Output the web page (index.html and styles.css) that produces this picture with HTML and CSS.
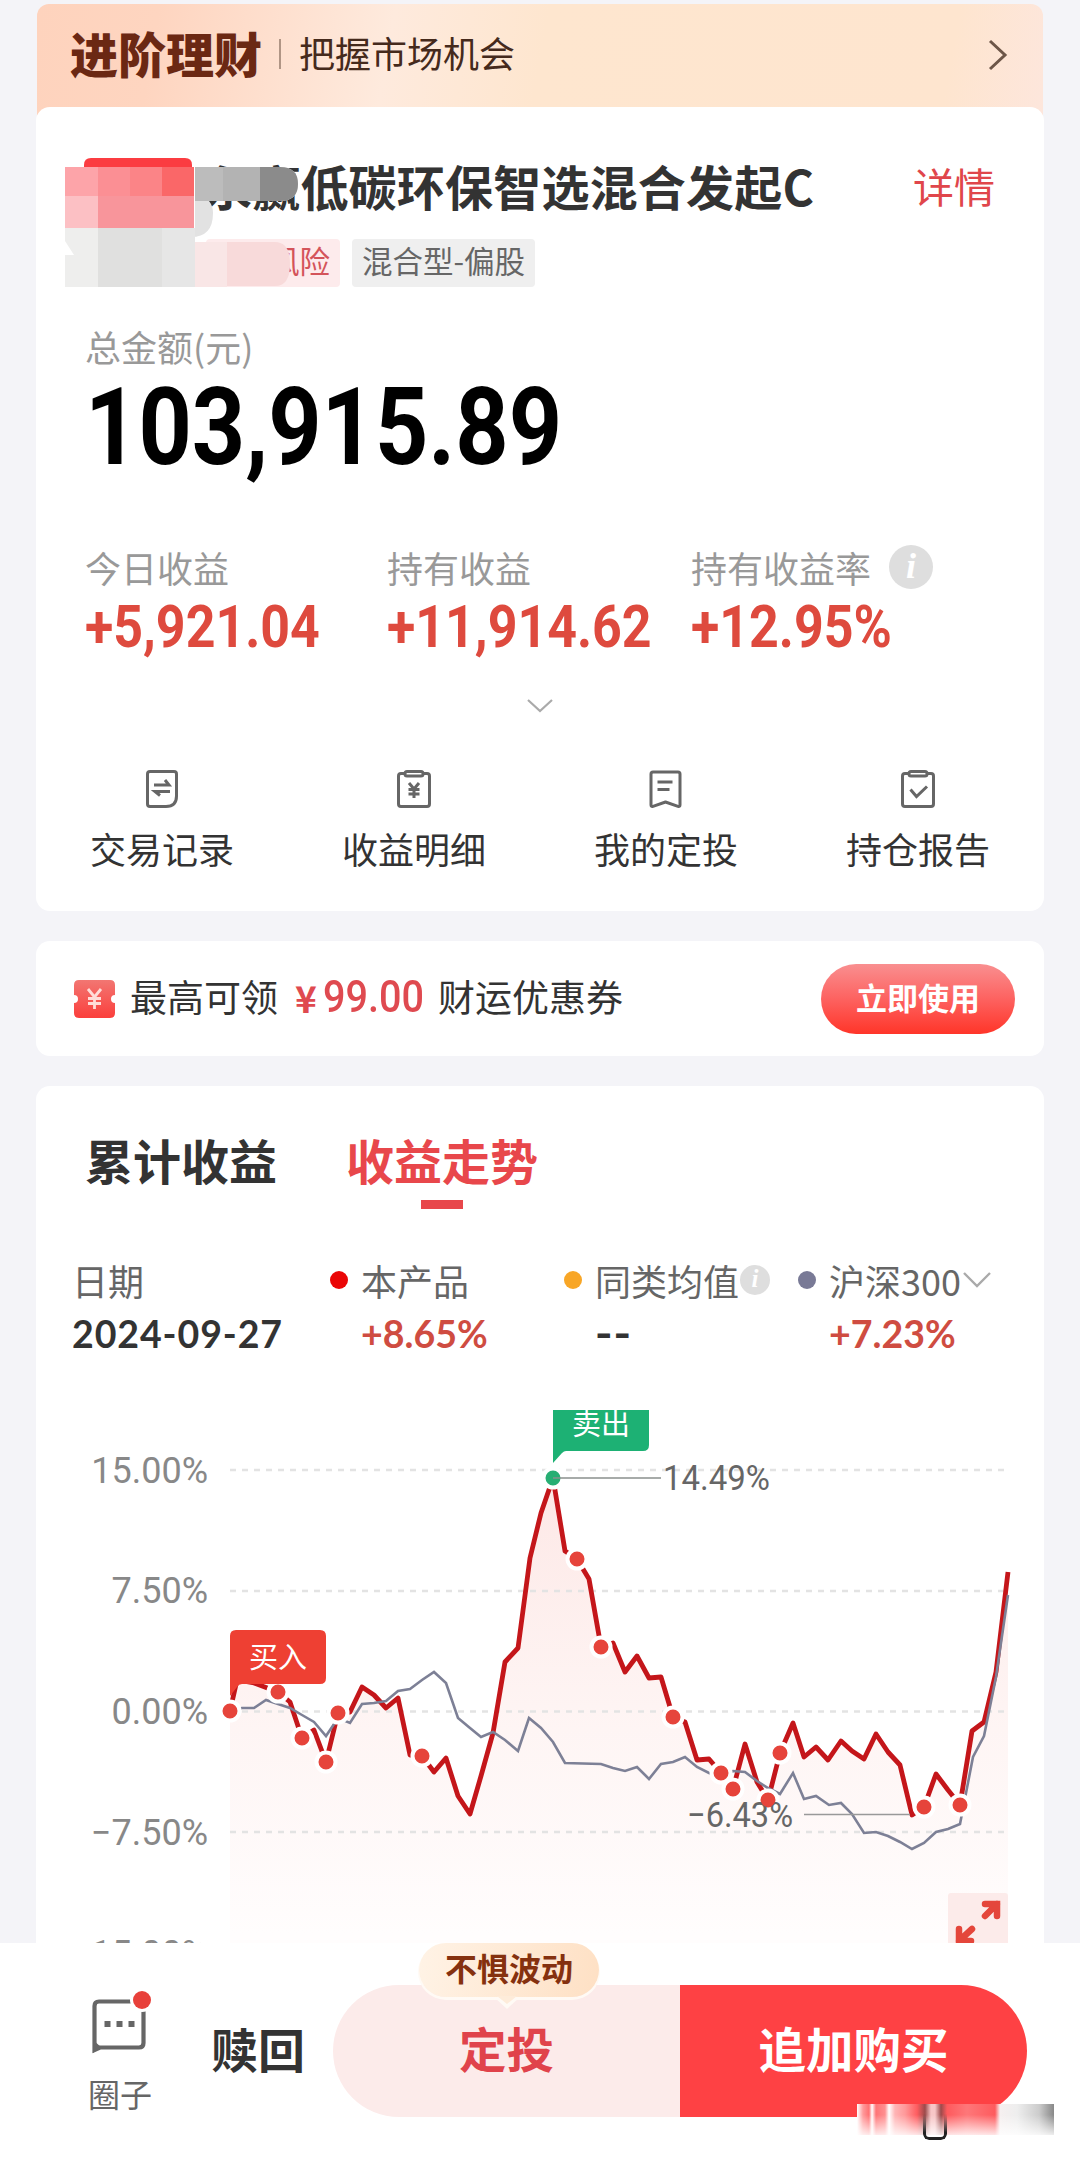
FILE: index.html
```
<!DOCTYPE html>
<html lang="zh-CN">
<head>
    <meta charset="UTF-8">
    <meta name="viewport" content="width=device-width, initial-scale=1.0">
    <title>进阶理财</title>
    <link rel="stylesheet" href="styles.css">
</head>
<body>

    <main class="content">
        <div class="banner">
            <strong class="banner-title">进阶理财</strong>
            <span class="banner-line"></span>
            <span class="banner-text">把握市场机会</span>
            <svg class="banner-arrow" width="20" height="32" viewBox="0 0 20 32" fill="none" stroke="#6d5648" stroke-width="3">
                <path d="M2 2l15 14L2 30" />
            </svg>
        </div>

        <section class="card fund">
            <svg class="mosaic" width="262" height="144" viewBox="0 0 262 144">
                <path d="M19 20V12q0-7 7-7h94q7 0 7 7v8z" fill="#fb3c41" />
                <path d="M0 80h130v-66h85q18 0 18 17 0 17-18 17h-71q4 5 4 12 0 24-22 24h-28v50H0z" fill="#e2e2e2" />
                <path d="M130 14h28v34h-28z" fill="#bcbcbc" />
                <path d="M158 14h37v34h-37z" fill="#b3b3b3" />
                <path d="M195 14h20q18 0 18 17 0 17-18 17h-20z" fill="#8b8b8b" />
                <rect x="0" y="14" width="33" height="29" fill="#fda4a9" />
                <rect x="33" y="14" width="32" height="29" fill="#fb8f94" />
                <rect x="65" y="14" width="32" height="29" fill="#fb8487" />
                <rect x="97" y="14" width="32" height="29" fill="#fa6768" />
                <rect x="0" y="43" width="33" height="32" fill="#fcc0c4" />
                <rect x="33" y="43" width="96" height="32" fill="#f8959b" />
                <rect x="0" y="75" width="33" height="59" fill="#eeeeed" />
                <rect x="33" y="75" width="64" height="59" fill="#e0e0df" />
                <rect x="97" y="75" width="33" height="59" fill="#e6e6e6" />
                <path d="M130 89h80q15 0 15 22t-15 22h-80z" fill="#f8dada" />
                <rect x="130" y="89" width="32" height="45" fill="#f9e6e6" />
                <path d="M0 88l9 14H0z" fill="#fff" />
            </svg>
            <div class="fund-head">
                <h1>永赢低碳环保智选混合发起C</h1>
                <a class="detail">详情</a>
            </div>
            <div class="tags">
                <span class="tag tag-risk">中高风险</span>
                <span class="tag">混合型-偏股</span>
            </div>

            <div class="label total-label">总金额(元)</div>
            <div class="total"><span class="num">103,915.89</span></div>

            <div class="stats">
                <div>
                    <div class="label">今日收益</div>
                    <div class="stat"><span class="num">+5,921.04</span></div>
                </div>
                <div>
                    <div class="label">持有收益</div>
                    <div class="stat"><span class="num">+11,914.62</span></div>
                </div>
                <div>
                    <div class="label">持有收益率 <i class="info">i</i></div>
                    <div class="stat"><span class="num">+12.95%</span></div>
                </div>
            </div>

            <svg class="expand" width="26" height="14" viewBox="0 0 26 14" fill="none" stroke="#aaa" stroke-width="2.2">
                <path d="M1 1l12 11L25 1" />
            </svg>

            <div class="actions">
                <div class="action">
                    <svg width="34" height="38" viewBox="0 0 34 38" fill="none" stroke="#666" stroke-width="3">
                        <path d="M5 1.5h24q2.500 0 2.500 2.500v22q0 10.500-10.500 10.500H5q-2.500 0-2.500-2.500V4q0-2.500 2.500-2.500z" />
                        <path d="M9 15h15l-4-5M25 21.500H10l5 4" />
                    </svg>
                    <span>交易记录</span>
                </div>
                <div class="action">
                    <svg width="34" height="38" viewBox="0 0 34 38" fill="none" stroke="#666" stroke-width="3">
                        <path d="M8 3.500H4q-2.500 0-2.500 2.500v28q0 2.500 2.500 2.500h26q2.500 0 2.500-2.500V6q0-2.500-2.500-2.500h-4" />
                        <rect x="8" y="1.500" width="18" height="4.500" rx="2" />
                        <path d="M12 13l5 6 5-6M17 19v9M11.500 19.500h11M11.500 24h11" />
                    </svg>
                    <span>收益明细</span>
                </div>
                <div class="action">
                    <svg width="34" height="38" viewBox="0 0 34 38" fill="none" stroke="#666" stroke-width="3">
                        <path d="M4 2h25q2 0 2 2v31q0 2-2 1.300L16.500 32 4 36.300q-2 .7-2-1.300V4q0-2 2-2z" stroke-linejoin="round" />
                        <path d="M8.500 12h15M8.500 19.500h12" />
                    </svg>
                    <span>我的定投</span>
                </div>
                <div class="action">
                    <svg width="34" height="38" viewBox="0 0 34 38" fill="none" stroke="#666" stroke-width="3">
                        <path d="M8 3.500H4q-2.500 0-2.500 2.500v28q0 2.500 2.500 2.500h26q2.500 0 2.500-2.500V6q0-2.500-2.500-2.500h-4" />
                        <rect x="8" y="1.500" width="18" height="4.500" rx="2" />
                        <path d="M9.500 19.500l6 7 10.500-10" />
                    </svg>
                    <span>持仓报告</span>
                </div>
            </div>
        </section>

        <section class="card coupon">
            <svg width="41" height="38" viewBox="0 0 41 38">
                <defs>
                    <linearGradient id="ticket" x1="0" y1="0" x2="0" y2="1">
                        <stop offset="0" stop-color="#f27672" />
                        <stop offset="1" stop-color="#fb3f3c" />
                    </linearGradient>
                </defs>
                <path d="M5 0h31q5 0 5 5v10q-4 0-4 4t4 4v10q0 5-5 5H5q-5 0-5-5V23q4 0 4-4t-4-4V5q0-5 5-5z" fill="url(#ticket)" />
                <path d="M14 9l6.500 8L27 9M20.500 17v12M14 18.500h13M14 23.500h13" fill="none" stroke="#ffdcd8" stroke-width="2.800" />
            </svg>
            <span class="coupon-text">最高可领</span>
            <span class="coupon-price"><b>¥</b><span class="num">99.00</span></span>
            <span class="coupon-text">财运优惠券</span>
            <a class="use-btn">立即使用</a>
        </section>

        <section class="card trend">
            <div class="tabs">
                <span class="tab">累计收益</span>
                <span class="tab active">收益走势</span>
            </div>

            <div class="legend">
                <div class="legend-item">
                    <div class="legend-name">日期</div>
                    <div class="legend-value date">2024-09-27</div>
                </div>
                <div class="legend-item">
                    <div class="legend-name"><i class="dot dot-red"></i>本产品</div>
                    <div class="legend-value up">+8.65%</div>
                </div>
                <div class="legend-item">
                    <div class="legend-name"><i class="dot dot-orange"></i>同类均值<i class="info info-small">i</i></div>
                    <div class="legend-value none">--</div>
                </div>
                <div class="legend-item">
                    <div class="legend-name"><i class="dot dot-blue"></i>沪深300
                        <svg width="28" height="16" viewBox="0 0 28 16" fill="none" stroke="#aaa" stroke-width="2.4">
                            <path d="M1 1l13 13L27 1" />
                        </svg>
                    </div>
                    <div class="legend-value up">+7.23%</div>
                </div>
            </div>

            <svg class="chart" width="1008" height="533" viewBox="36 1410 1008 533">
                <defs>
                    <linearGradient id="area" gradientUnits="userSpaceOnUse" x1="0" y1="1478" x2="0" y2="1935">
                        <stop offset="0" stop-color="#fde8e6" />
                        <stop offset="0.500" stop-color="#fef4f3" />
                        <stop offset="1" stop-color="#fffdfd" />
                    </linearGradient>
                </defs>

                <!-- area under the product line -->
                <path fill="url(#area)" d="M230 1943V1711L237 1680 254 1683 278 1692 290 1702 302 1738 314 1730 326 1762 338 1713 350 1712 362 1687 374 1695 386 1708 398 1698 410 1755 422 1756 434 1772 446 1758 458 1796 470 1814 481 1776 493 1733 505 1662 518 1648 530 1558 541 1513 553 1478 565 1551 577 1559 589 1579 601 1647 613 1643 625 1672 637 1656 649 1678 661 1677 673 1717 685 1722 697 1760 709 1759 721 1773 733 1789 745 1744 757 1782 768 1800 780 1753 793 1723 804 1757 816 1747 828 1760 841 1741 852 1751 864 1759 876 1734 888 1752 900 1765 912 1815 924 1807 936 1774 948 1790 960 1805 972 1731 984 1722 996 1672 1008 1572V1943z" />

                <g class="grid">
                    <path d="M230 1470H1008M230 1591H1008M230 1711.500H1008M230 1832H1008" />
                </g>

                <g class="axis">
                    <text x="208" y="1483">15.00%</text>
                    <text x="208" y="1603">7.50%</text>
                    <text x="208" y="1724">0.00%</text>
                    <text x="208" y="1845">−7.50%</text>
                    <text x="208" y="1966">15.00%</text>
                </g>

                <polyline class="line-product" points="230,1711 237,1680 254,1683 278,1692 290,1702 302,1738 314,1730 326,1762 338,1713 350,1712 362,1687 374,1695 386,1708 398,1698 410,1755 422,1756 434,1772 446,1758 458,1796 470,1814 481,1776 493,1733 505,1662 518,1648 530,1558 541,1513 553,1478 565,1551 577,1559 589,1579 601,1647 613,1643 625,1672 637,1656 649,1678 661,1677 673,1717 685,1722 697,1760 709,1759 721,1773 733,1789 745,1744 757,1782 768,1800 780,1753 793,1723 804,1757 816,1747 828,1760 841,1741 852,1751 864,1759 876,1734 888,1752 900,1765 912,1815 924,1807 936,1774 948,1790 960,1805 972,1731 984,1722 996,1672 1008,1572" />
                <polyline class="line-index" points="230,1711 242,1708 254,1708 266,1700 278,1704 290,1708 302,1715 314,1722 326,1736 338,1718 350,1723 362,1704 374,1703 386,1701 398,1691 410,1689 422,1680 434,1672 446,1683 458,1718 470,1728 481,1737 493,1732 505,1740 518,1751 529,1718 541,1728 553,1742 565,1763 601,1764 613,1768 625,1771 637,1767 649,1779 661,1764 673,1762 685,1757 697,1767 709,1773 721,1776 733,1771 745,1772 757,1781 768,1788 780,1794 793,1773 804,1799 816,1796 829,1805 841,1803 852,1814 864,1833 876,1832 888,1836 900,1842 912,1849 924,1843 936,1832 948,1829 960,1824 973,1757 984,1736 996,1677 1008,1595" />

                <g class="trades">
                    <circle cx="230" cy="1711" r="9.500" />
                    <circle cx="278" cy="1692" r="9.500" />
                    <circle cx="302" cy="1738" r="9.500" />
                    <circle cx="326" cy="1762" r="9.500" />
                    <circle cx="338" cy="1713" r="9.500" />
                    <circle cx="422" cy="1756" r="9.500" />
                    <circle cx="577" cy="1559" r="9.500" />
                    <circle cx="601" cy="1647" r="9.500" />
                    <circle cx="673" cy="1717" r="9.500" />
                    <circle cx="721" cy="1773" r="9.500" />
                    <circle cx="733" cy="1789" r="9.500" />
                    <circle cx="768" cy="1800" r="9.500" />
                    <circle cx="780" cy="1753" r="9.500" />
                    <circle cx="924" cy="1807" r="9.500" />
                    <circle cx="960" cy="1805" r="9.500" />
                    <circle class="sell" cx="553" cy="1478" r="9.500" />
                </g>

                <!-- highest and lowest points -->
                <path d="M553 1478H661" stroke="#8a8f8c" stroke-width="1.500" />
                <text class="peak" x="663" y="1490" textLength="107" lengthAdjust="spacingAndGlyphs">14.49%</text>
                <text class="peak" x="687" y="1827" textLength="106" lengthAdjust="spacingAndGlyphs">−6.43%</text>
                <path d="M804 1814.500H910" stroke="#999" stroke-width="1.500" />
                <circle cx="768" cy="1800" r="7" fill="#e6443b" />

                <path d="M236 1630h84q6 0 6 6v42q0 6-6 6h-78q-3 0-5 3l-7 9v-60q0-6 6-6z" fill="#ee4033" />
                <text class="flag" x="278" y="1668">买入</text>
                <path d="M553 1400h96v45q0 6-6 6h-77q-2 0-4 2l-9 10z" fill="#1db174" />
                <text class="flag" x="601" y="1435">卖出</text>

                <rect x="948" y="1893" width="60" height="60" rx="3" fill="#fcebea" />
                <path d="M985 1904h12v12M997 1904l-12 12M959 1929v12h12M959 1941l13-12" fill="none" stroke="#e4463b" stroke-width="6.500" stroke-linecap="round" />
            </svg>
        </section>
    </main>

    <footer class="bar">
        <div class="circle">
            <svg width="56" height="64" viewBox="0 0 56 64" fill="none">
                <path d="M2.500 60V16q0-4.500 4.500-4.500h40q4.500 0 4.500 4.500v37q0 4.500-4.500 4.500H8z" stroke="#666" stroke-width="4.200" />
                <path d="M1 50v13l8-6z" fill="#666" />
                <path d="M12.500 31h6v6h-6zM24.500 31h6v6h-6zM36.500 31h6v6h-6z" fill="#666" />
                <circle cx="50" cy="10" r="12" fill="#fff" />
                <circle cx="50" cy="10" r="9" fill="#e8403a" />
            </svg>
            <span>圈子</span>
        </div>
        <a class="redeem">赎回</a>
        <div class="buttons">
            <a class="btn btn-plan">定投</a>
            <a class="btn btn-buy">追加购买</a>
            <span class="bubble">不惧波动</span>
        </div>
        <div class="smear"></div>
    </footer>

</body>
</html>
```
FILE: styles.css
```
* {
    box-sizing: border-box;
}

body {
    font-family: "Noto Sans CJK SC", sans-serif;
    margin: 0;
    height: 2159px;
    display: flex;
    flex-direction: column;
    overflow: hidden;
    background-color: #f4f4f8;
    color: #333;
}

.content {
    height: 1943px;
    padding: 4px 36px 0;
    overflow: hidden;
}

.banner {
    display: flex;
    align-items: center;
    height: 115px;
    margin: 0 1px -12px;
    padding: 0 35px 20px 33px;
    border-radius: 12px 12px 0 0;
    background: linear-gradient(100deg, #fed3bd 0%, #fed5c0 12%, #feeadd 35%, #fee6cf 50%, #fee5cf 90%, #fde6dc 100%);
}

.banner-title {
    font-size: 48px;
    font-weight: 900;
    line-height: 60px;
    color: #6b2813;
}

.banner-line {
    width: 2px;
    height: 30px;
    margin: 4px 18px 0 17px;
    background: #b09585;
}

.banner-text {
    font-size: 36px;
    color: #452a1c;
}

.banner-arrow {
    margin: 6px 0 0 auto;
}

.card {
    background: #fff;
    border-radius: 14px;
}

.fund {
    position: relative;
    height: 804px;
    padding-top: 50px;
}

/* blurred-out logo and name */
.mosaic {
    position: absolute;
    left: 29px;
    top: 46px;
}

.fund-head {
    display: flex;
    justify-content: space-between;
    align-items: center;
    height: 56px;
    padding: 0 49px 0 168px;
}

h1 {
    margin: 0;
    font-size: 48px;
    font-weight: 700;
    letter-spacing: 0.2px;
    line-height: 56px;
    white-space: nowrap;
}

.detail {
    font-size: 41px;
    line-height: 56px;
    color: #e0464b;
}

.tags {
    display: flex;
    gap: 12px;
    margin-top: 26px;
    padding-left: 170px;
}

.tag {
    height: 48px;
    padding: 0 10px;
    border-radius: 4px;
    font-size: 30.5px;
    line-height: 43px;
    color: #666;
    background: #efefef;
}

.tag-risk {
    width: 134px;
    direction: rtl;
    overflow: hidden;
    white-space: nowrap;
    color: #d4545a;
    background: #fdebec;
}

.label {
    display: flex;
    align-items: center;
    font-size: 36px;
    line-height: 44px;
    height: 44px;
    color: #999;
}

.total-label {
    margin: 37px 0 5px 49px;
}

.num {
    display: inline-block;
    font-family: Roboto, sans-serif;
    transform: scaleX(0.87);
    transform-origin: left;
}

.total {
    height: 90px;
    padding-left: 49px;
    font-size: 107px;
    font-weight: 700;
    line-height: 90px;
    color: #000;
}

.stats {
    display: grid;
    grid-template-columns: 302px 304px 1fr;
    margin-top: 82px;
    padding-left: 49px;
}

.stat {
    margin-top: 3px;
    font-size: 59px;
    font-weight: 700;
    line-height: 60px;
    color: #de4a3e;
}

.stat .num {
    transform: scaleX(0.88);
}

.info {
    width: 44px;
    height: 44px;
    margin-left: 18px;
    border-radius: 50%;
    background: #dedede;
    color: #fff;
    font-family: "Liberation Serif", serif;
    font-size: 36px;
    font-weight: 700;
    line-height: 42px;
    text-align: center;
}

.info-small {
    width: 30px;
    height: 30px;
    margin-left: 1px;
    font-size: 25px;
    line-height: 28px;
}

.expand {
    display: block;
    margin: 42px auto 0;
}

.actions {
    display: grid;
    grid-template-columns: repeat(4, 1fr);
    margin-top: 57px;
}

.action {
    display: flex;
    flex-direction: column;
    align-items: center;
    gap: 18px;
    font-size: 36px;
    line-height: 44px;
}

.coupon {
    display: flex;
    align-items: center;
    height: 115px;
    margin-top: 30px;
    padding: 0 29px 0 38px;
}

.coupon-text {
    margin: -6px 0 0 15px;
    font-size: 37px;
    white-space: nowrap;
}

.coupon-price {
    display: flex;
    align-items: center;
    width: 145px;
    margin-top: -4px;
    padding-left: 17px;
    color: #df4a50;
    font-size: 44px;
    font-weight: 500;
}

.coupon-price .num {
    margin-left: 6px;
    transform: scaleX(0.9);
}

.coupon-price b {
    font-family: "Noto Sans CJK SC", sans-serif;
    font-size: 37px;
}

.use-btn {
    width: 194px;
    height: 70px;
    margin-left: auto;
    border-radius: 35px;
    background: linear-gradient(#f98f90, #fd6260 50%, #ff3529);
    color: #fff;
    font-size: 31px;
    font-weight: 700;
    line-height: 65px;
    text-align: center;
}

.trend {
    height: 900px;
    margin-top: 30px;
    padding-top: 43px;
}

.tabs {
    display: flex;
    gap: 69px;
    padding-left: 49px;
}

.tab {
    font-size: 48px;
    font-weight: 700;
    line-height: 60px;
}

.tab.active {
    color: #e8474b;
}

.tab.active::after {
    content: "";
    display: block;
    width: 42px;
    height: 9px;
    margin: 11px auto 0;
    background: #e8474b;
}

.legend {
    display: grid;
    grid-template-columns: 258px 234px 234px 1fr;
    height: 201px;
    padding: 49px 0 0 36px;
}

.legend-name {
    display: flex;
    align-items: center;
    height: 44px;
    font-size: 36px;
    line-height: 44px;
    color: #666;
    white-space: nowrap;
}

.legend-name svg {
    margin-left: 2px;
}

.legend-value {
    margin-top: 10px;
    font-family: Lato, sans-serif;
    font-size: 37.5px;
    font-weight: 700;
    line-height: 44px;
}

.date {
    letter-spacing: 0.9px;
}

.legend-value.up,
.legend-value.none {
    padding-left: 31px;
}

.up {
    color: #cf4c41;
}

.legend-value.none {
    font-family: Inter, sans-serif;
    letter-spacing: 1px;
}

.dot {
    width: 18px;
    height: 18px;
    margin-right: 13px;
    border-radius: 50%;
}

.dot-red {
    background: #ea0606;
}

.dot-orange {
    background: #f8a626;
}

.dot-blue {
    background: #797a96;
}

.chart {
    display: block;
}

.grid path {
    stroke: #e3e3e3;
    stroke-width: 2.5;
    stroke-dasharray: 6 6;
}

.axis text {
    font-family: Roboto, sans-serif;
    font-size: 36px;
    fill: #888;
    text-anchor: end;
}

.line-product {
    fill: none;
    stroke: #c4161a;
    stroke-width: 4.8;
    stroke-linejoin: round;
}

.line-index {
    fill: none;
    stroke: #7d8096;
    stroke-width: 2.6;
}

.peak {
    font-family: Roboto, sans-serif;
    font-size: 35px;
    fill: #666;
}

.trades circle {
    fill: #e6443b;
    stroke: #fff;
    stroke-width: 4;
}

.trades .sell {
    fill: #27ae73;
}

.flag {
    font-size: 29px;
    fill: #fff;
    text-anchor: middle;
}

.bar {
    position: relative;
    display: flex;
    height: 216px;
    background: #fff;
}

.circle {
    display: flex;
    flex-direction: column;
    align-items: center;
    width: 66px;
    margin: 47px 0 0 87px;
    font-size: 32px;
    line-height: 40px;
    color: #666;
    white-space: nowrap;
}

.circle svg {
    overflow: visible;
}

.circle span {
    margin-top: 19px;
}

.redeem {
    margin: 75px 28px 0 58px;
    font-size: 47px;
    font-weight: 700;
    line-height: 60px;
}

.buttons {
    position: relative;
    display: flex;
    width: 694px;
    height: 132px;
    margin-top: 42px;
    border-radius: 66px;
}

.btn {
    flex: 1;
    font-size: 47.5px;
    font-weight: 700;
    line-height: 126px;
    text-align: center;
}

.btn-plan {
    border-radius: 66px 0 0 66px;
    background: #fcebea;
    color: #e0434b;
}

.btn-buy {
    border-radius: 0 66px 66px 0;
    background: #fe4144;
    color: #fff;
}

.bubble {
    position: absolute;
    left: 86px;
    top: -42px;
    width: 180px;
    height: 54px;
    border-radius: 27px;
    background: linear-gradient(100deg, #fff3e6, #fee0c4);
    box-shadow: 0 2px 0 1px #fffaf5;
    color: #85310f;
    font-size: 32px;
    font-weight: 700;
    line-height: 49px;
    text-align: center;
}

.bubble::before,
.bubble::after {
    content: "";
    position: absolute;
    left: 75px;
    top: 54px;
    border: 13px solid transparent;
    border-top: 12px solid #fffaf5;
    border-bottom: 0;
}

.bubble::after {
    left: 78px;
    top: 53px;
    border-width: 8px 10px 0;
    border-top-color: #feecda;
}

/* smudge over the lower right corner */
.smear {
    position: absolute;
    left: 857px;
    top: 161px;
    width: 197px;
    height: 31px;
    background:
        linear-gradient(rgba(255, 255, 255, 0) 35%, rgba(255, 255, 255, 0.85)),
        linear-gradient(90deg, #fff 0, #ff9a9b 6px, #ff7173 12px, #fff 15px, #ff7577 19px, #ff8f90 28px, #fff 32px, #ffb4b5 38px, #ff999a 48px, #ff5d60 60px, #9c4a4b 68px, #f7c6c7 74px, #f7c6c7 78px, #9c4a4b 84px, #fe5a5d 90px, #fe7779 110px, #fe5b5e 138px, #f6f0f0 143px, #eee 160px, #ccc 182px, #888 197px);
}

.smear::after {
    content: "";
    position: absolute;
    left: 66px;
    top: 10px;
    width: 18px;
    height: 23px;
    border: 3px solid #222;
    border-top: 0;
    border-radius: 0 0 6px 6px;
    -webkit-mask: linear-gradient(transparent, #000 70%);
    mask: linear-gradient(transparent, #000 70%);
}
```
